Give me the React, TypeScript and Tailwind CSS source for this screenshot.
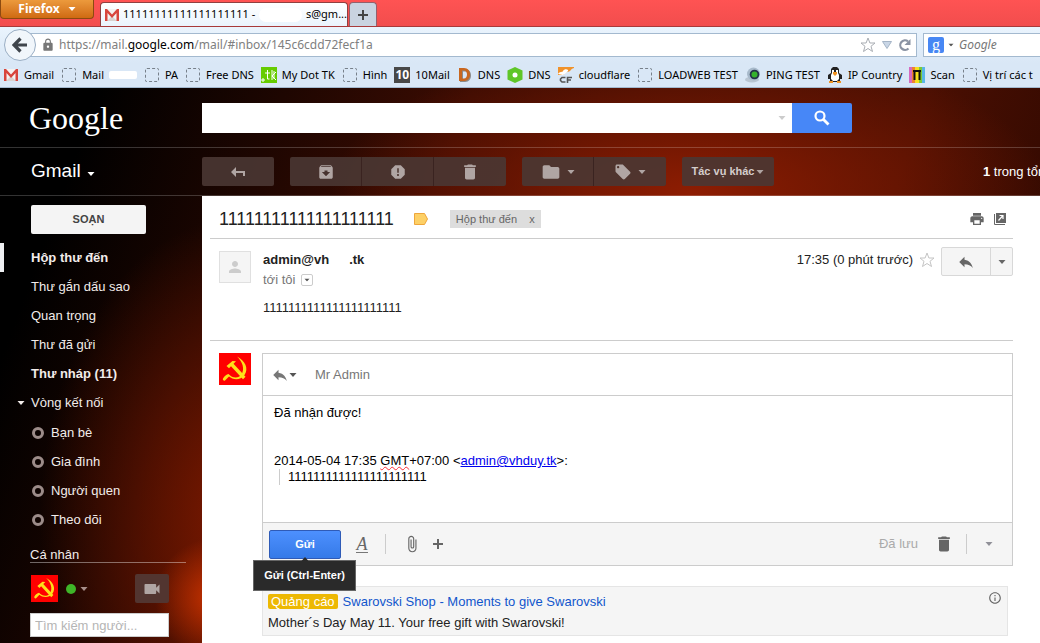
// src/App.tsx
import React from "react";
import {
  MdArchive,
  MdAttachFile,
  MdDelete,
  MdFolder,
  MdInfoOutline,
  MdLocalOffer,
  MdLock,
  MdPerson,
  MdPrint,
  MdReply,
  MdReport,
  MdVideocam,
} from "react-icons/md";

const Caret: React.FC<{ className?: string }> = ({ className = "" }) => (
  <svg
    viewBox="0 0 8 4"
    className={`h-1 w-2 shrink-0 ${className}`}
    fill="currentColor"
    aria-hidden="true"
  >
    <path d="M.5 0h7L4 4z" />
  </svg>
);

const GmailIcon: React.FC = () => (
  <svg viewBox="0 0 16 16" className="h-4 w-4 shrink-0" aria-hidden="true">
    <path d="M1 2h14v12H1z" fill="#f4f1f0" />
    <path d="M3 14l5-5 5 5z" fill="#d8d3d1" />
    <path d="M1 2h2l5 5.500L13 2h2v12h-2.500V6L8 11 3.500 6v8H1z" fill="#d8453c" />
  </svg>
);

const FlagIcon: React.FC<{ className: string }> = ({ className }) => (
  <svg viewBox="0 0 32 32" className={`shrink-0 ${className}`} aria-hidden="true">
    <path d="M0 0h32v32H0z" fill="#f00" />
    <path
      d="M18 3.500c8 4 12 12 7.500 18.500-4 5.500-11.500 5-15.500 1.500l-4 4c-1 .8-2.800-.8-2-2 1.500-2.500 3.500-4 5.500-4.500 4 4.500 10 4.800 13 .5 3.500-5.500 1-13-4.500-18z"
      fill="#fde01a"
    />
    <path d="M7.500 13l6-5 3.500.3-2.500 2.500 12 13-2.500 2.500-12-13-2 2z" fill="#fde01a" />
  </svg>
);

const BlankIcon: React.FC = () => (
  <span className="mx-px h-3.5 w-3.5 shrink-0 rounded-[2px] border border-dashed border-[#77808a]" />
);

const TkIcon: React.FC = () => (
  <svg viewBox="0 0 16 16" className="h-4 w-4 shrink-0" aria-hidden="true">
    <path d="M0 0h16v16H0z" fill="#6c0" />
    <path
      d="M1 12h2v2H1zM4 6h5M6.500 3v9h2M11 3v10M15 5l-4 4 4 4M13 4v8"
      fill="none"
      stroke="#fff"
      strokeWidth="1"
    />
  </svg>
);

const TenIcon: React.FC = () => (
  <span className="flex h-4 w-4 shrink-0 items-center justify-center bg-[#484848] text-xs font-bold text-white">
    10
  </span>
);

const DIcon: React.FC = () => (
  <svg viewBox="0 0 16 16" className="h-4 w-4 shrink-0" aria-hidden="true">
    <path
      d="M3 2h5c8 0 8 13 0 13H3zM6 4.500v8h2c4 0 4-8 0-8z"
      fill="#8b8b8b"
      fillRule="evenodd"
    />
    <path
      d="M2 1h5c8 0 8 13 0 13H2zM5 3.500v8h2c4 0 4-8 0-8z"
      fill="#c9671f"
      fillRule="evenodd"
    />
  </svg>
);

const HexIcon: React.FC = () => (
  <svg viewBox="0 0 16 16" className="h-4 w-4 shrink-0" aria-hidden="true">
    <path d="M8 0l7.500 3.500v9L8 16 .5 12.500v-9z" fill="#5fc628" />
    <circle cx="8" cy="8" r="2.500" fill="#fff" />
  </svg>
);

const CloudIcon: React.FC = () => (
  <svg viewBox="0 0 16 16" className="h-4 w-4 shrink-0" aria-hidden="true">
    <path d="M0 0h16v1c-4 1-3 4-7 4-2 0-2 3-5 3H0z" fill="#f0922b" />
    <path d="M0 7c2-3 4-1 5-3s4-2 5-1-3 4-5 5z" fill="#fff" />
    <path
      d="M7.500 10.500H4L2.500 12v1.500L4 15h3.500M9.500 16v-5.500H14M9.500 13H13"
      fill="none"
      stroke="#555"
      strokeWidth="1.600"
    />
  </svg>
);

const PingIcon: React.FC = () => (
  <svg viewBox="0 0 16 16" className="h-4 w-4 shrink-0" aria-hidden="true">
    <ellipse cx="7" cy="12.500" rx="7" ry="3" fill="#b9c6d3" />
    <circle cx="8.500" cy="7" r="6.500" fill="#a8bacb" />
    <circle cx="9.500" cy="7.500" r="4.800" fill="#25344a" />
    <circle cx="9.500" cy="7.500" r="3" fill="#35b32c" />
  </svg>
);

const PenguinIcon: React.FC = () => (
  <svg viewBox="0 0 16 16" className="h-4 w-4 shrink-0" aria-hidden="true">
    <path d="M4 2l2-2h4l2 2v4l3 2v4h-2v3H3v-3H1V8l3-2z" fill="#222" />
    <path d="M5 3h2v2h2V3h2v3l1 2v4l-2 2H6l-2-2V8l1-2z" fill="#fff" />
    <path d="M7 2h2v3H7z" fill="#222" />
    <path d="M6 5h4v2L8 9 6 7zM2 14h4v2H2zM10 14h4v2h-4z" fill="#f29422" />
  </svg>
);

const ScanIcon: React.FC = () => (
  <svg viewBox="0 0 16 16" className="h-4 w-4 shrink-0" aria-hidden="true">
    <path d="M0 0h3v16H0z" fill="#d56ac0" />
    <path d="M3 0h3v16H3z" fill="#ee8131" />
    <path d="M6 0h4v16H6z" fill="#f5e01d" />
    <path d="M10 0h3v16h-3z" fill="#7ccb35" />
    <path d="M13 0h3v16h-3z" fill="#59b6e6" />
    <path d="M4 4h8M5.500 4v9M10.500 4v9" stroke="#111" strokeWidth="2" />
  </svg>
);

const BackIcon: React.FC = () => (
  <svg viewBox="0 0 16 16" className="h-4 w-4" aria-hidden="true">
    <path
      d="M15 8H3M8.500 1.500L2 8l6.500 6.500"
      fill="none"
      stroke="currentColor"
      strokeWidth="3.200"
    />
  </svg>
);

const PlusIcon: React.FC = () => (
  <svg viewBox="0 0 10 10" className="h-2.5 w-2.5" aria-hidden="true">
    <path d="M0 5h10M5 0v10" stroke="currentColor" strokeWidth="2" />
  </svg>
);

const SearchIcon: React.FC = () => (
  <svg viewBox="0 0 16 16" className="h-4 w-4" aria-hidden="true">
    <circle cx="6" cy="6" r="4.500" fill="none" stroke="currentColor" strokeWidth="2.200" />
    <path d="M9.500 9.500l5 5" stroke="currentColor" strokeWidth="2.800" />
  </svg>
);

const ReloadIcon: React.FC = () => (
  <svg viewBox="0 0 14 14" className="h-3.5 w-3.5 text-[#8a93a3]" aria-hidden="true">
    <path
      d="M10.500 10.500A4.800 4.800 0 1110 3.300"
      fill="none"
      stroke="currentColor"
      strokeWidth="2.200"
    />
    <path d="M12.500 1v6H6.500z" fill="currentColor" />
  </svg>
);

const ReplyArrow: React.FC = () => (
  <svg viewBox="0 0 14 10" className="h-2.5 w-3.5" fill="currentColor" aria-hidden="true">
    <path d="M5 0v4h9v5h-2V6H5v4L0 5z" />
  </svg>
);

const StarIcon: React.FC<{ className: string }> = ({ className }) => (
  <svg viewBox="0 0 16 16" className={`h-4 w-4 shrink-0 ${className}`} aria-hidden="true">
    <path
      d="M8 1l1.900 5H15l-4 3.300 1.500 5.200L8 11.500l-4.500 3L5 9.300 1 6h5.100z"
      fill="#fff"
      stroke="currentColor"
    />
  </svg>
);

const PopOutIcon: React.FC = () => (
  <svg viewBox="0 0 12 12" className="h-3 w-3" aria-hidden="true">
    <path d="M2 0h10v10H2z" fill="#666" />
    <path d="M.5 1v10.500H11" fill="none" stroke="#666" />
    <path d="M4.500 7.500l4.500-5M5.500 2.500H9V6" fill="none" stroke="#fff" strokeWidth="1.200" />
  </svg>
);

const bookmarks = [
  { label: "Gmail", icon: <GmailIcon /> },
  { label: "Mail", icon: <BlankIcon />, masked: true },
  { label: "PA", icon: <BlankIcon /> },
  { label: "Free DNS", icon: <BlankIcon /> },
  { label: "My Dot TK", icon: <TkIcon /> },
  { label: "Hình", icon: <BlankIcon /> },
  { label: "10Mail", icon: <TenIcon /> },
  { label: "DNS", icon: <DIcon /> },
  { label: "DNS", icon: <HexIcon /> },
  { label: "cloudflare", icon: <CloudIcon /> },
  { label: "LOADWEB TEST", icon: <BlankIcon /> },
  { label: "PING TEST", icon: <PingIcon /> },
  { label: "IP Country", icon: <PenguinIcon /> },
  { label: "Scan", icon: <ScanIcon /> },
  { label: "Vị trí các t", icon: <BlankIcon /> },
];

const folders = [
  { label: "Hộp thư đến", bold: true, active: true },
  { label: "Thư gắn dấu sao" },
  { label: "Quan trọng" },
  { label: "Thư đã gửi" },
  { label: "Thư nháp (11)", bold: true },
];

const circles = ["Bạn bè", "Gia đình", "Người quen", "Theo dõi"];

const BrowserChrome: React.FC = () => (
  <div className="shrink-0 bg-[#d9e7f6] font-['Segoe_UI','Noto_Sans',sans-serif] text-[11px] whitespace-nowrap text-black">
    <div className="flex h-[27px] items-end border-b border-[#a83a3a] bg-linear-to-b from-[#ff5353] to-[#f24d4d]">
      <button className="flex h-[19px] w-[94px] items-center justify-center gap-2 self-start rounded-b border border-t-0 border-[#8c4a10] bg-linear-to-b from-[#ec9a3c] to-[#cf6a10] text-xs font-bold text-white">
        Firefox
        <Caret />
      </button>
      <div className="ml-1.5 flex h-6 w-[248px] items-center overflow-hidden rounded-t border border-b-0 border-[#8f4040] bg-linear-to-b from-white to-[#eaf4fd] pl-[3px]">
        <GmailIcon />
        <span className="ml-[3px]">11111111111111111111 -</span>
        <span className="mx-1 h-3.5 w-11 shrink rounded-full bg-white" />
        <span>s@gm...</span>
      </div>
      <button
        aria-label="New tab"
        className="ml-px flex h-6 w-7 items-center justify-center rounded-t border border-b-0 border-[#93606b] bg-[#c9d3e0] text-[#444]"
      >
        <PlusIcon />
      </button>
    </div>
    <div className="flex h-9 items-center bg-linear-to-b from-[#eaf4fd] to-[#d9e7f6] pl-1">
      <button
        aria-label="Back"
        className="z-10 flex h-8 w-8 shrink-0 items-center justify-center rounded-full border border-[#9aaec4] bg-[#f1f6fb] text-[#3f454c]"
      >
        <BackIcon />
      </button>
      <div className="-ml-2 flex h-6 flex-1 items-center border border-[#a3b9cf] bg-white pr-1 pl-3">
        <MdLock className="h-3.5 w-3.5 text-[#777]" />
        <span className="ml-1 flex-1 text-xs text-[#808080]">
          https://mail.<span className="text-black">google.com</span>
          /mail/#inbox/145c6cdd72fecf1a
        </span>
        <StarIcon className="text-[#a9adb3]" />
        <svg viewBox="0 0 10 8" className="mx-1.5 h-2 w-2.5" aria-hidden="true">
          <path d="M.5.5h9L5 7.500z" fill="#c9d6e6" stroke="#a5b4c6" />
        </svg>
        <ReloadIcon />
      </div>
      <div className="ml-1.5 flex h-6 w-[117px] items-center border border-r-0 border-[#a3b9cf] bg-white pl-1">
        <span className="flex h-4 w-4 items-center justify-center rounded-xs bg-[#4787f4] font-['Liberation_Serif',serif] text-base leading-none text-white">
          g
        </span>
        <Caret className="ml-[3px] scale-75 text-[#555]" />
        <input
          aria-label="Search"
          placeholder="Google"
          className="w-16 pl-1 text-xs italic outline-none placeholder:text-[#777]"
        />
      </div>
    </div>
    <div className="flex h-[25px] items-center gap-[7px] overflow-hidden border-b border-[#a3b9cf] pl-[3px]">
      {bookmarks.map((item, index) => (
        <a key={index} href="#" className="flex shrink-0 items-center gap-[5px]">
          {item.icon}
          {item.label}
          {item.masked && <span className="h-2 w-7 rounded-xs bg-white" />}
        </a>
      ))}
    </div>
  </div>
);

const toolButton =
  "flex h-[29px] w-[72px] items-center justify-center gap-1.5 bg-[#4a3733]/90 text-[#b0a5a3]";

const Toolbar: React.FC = () => (
  <div className="flex h-12 shrink-0 items-center border-b border-white/20">
    <button className="flex w-[202px] shrink-0 items-center gap-1.5 pl-[31px] text-[19px] text-white">
      Gmail
      <Caret className="mt-1" />
    </button>
    <div className="flex flex-1 items-center gap-4">
      <button aria-label="Back" className={`${toolButton} rounded-xs`}>
        <ReplyArrow />
      </button>
      <div className="flex divide-x divide-[#3a2320] overflow-hidden rounded-xs">
        <button aria-label="Archive" className={toolButton}>
          <MdArchive className="h-[18px] w-[18px]" />
        </button>
        <button aria-label="Report spam" className={toolButton}>
          <MdReport className="h-[18px] w-[18px]" />
        </button>
        <button aria-label="Delete" className={toolButton}>
          <MdDelete className="h-5 w-5" />
        </button>
      </div>
      <div className="flex divide-x divide-[#3a2320] overflow-hidden rounded-xs">
        <button aria-label="Move to" className={toolButton}>
          <MdFolder className="h-5 w-5" />
          <Caret />
        </button>
        <button aria-label="Labels" className={toolButton}>
          <MdLocalOffer className="h-[18px] w-[18px]" />
          <Caret />
        </button>
      </div>
      <button className="flex h-[29px] w-[92px] items-center justify-center gap-0.5 rounded-xs bg-[#4a3733]/90 text-[11px] font-bold whitespace-nowrap text-[#d4cdcb]">
        Tác vụ khác
        <Caret className="text-[#b0a5a3]" />
      </button>
    </div>
    <p className="w-[57px] shrink-0 whitespace-nowrap text-white">
      <b>1</b> trong tổn
    </p>
  </div>
);

const Sidebar: React.FC = () => (
  <aside className="w-[202px] shrink-0 pt-[9px] text-[#f2ecea]">
    <button className="ml-[31px] h-[29px] w-[115px] rounded-xs bg-[#f4f4f4] text-[11px] font-bold text-[#444]">
      SOẠN
    </button>
    <ul className="mt-[9px]">
      {folders.map((item) => (
        <li key={item.label}>
          <a
            href="#"
            className={`flex h-[29px] items-center border-l-4 pl-[27px] ${item.active ? "border-[#eef0f2]" : "border-transparent"} ${item.bold ? "font-bold" : ""}`}
          >
            {item.label}
          </a>
        </li>
      ))}
      <li>
        <button className="flex h-[30px] items-center gap-1.5 pl-[17px]">
          <Caret />
          Vòng kết nối
        </button>
      </li>
      {circles.map((label) => (
        <li key={label}>
          <a href="#" className="flex h-[29px] items-center gap-[7px] pl-8">
            <span className="h-3 w-3 rounded-full border-[3px] border-[#9c8c89]" />
            {label}
          </a>
        </li>
      ))}
    </ul>
    <h2 className="mr-4 ml-[30px] mt-[13px] border-b border-white/40">
      <span className="block h-[15px] leading-[15px]">Cá nhân</span>
    </h2>
    <div className="mt-[11px] flex items-center pl-[31px]">
      <FlagIcon className="h-[27px] w-[27px]" />
      <span className="ml-2 h-2.5 w-2.5 rounded-full bg-[#3fb528]" />
      <Caret className="ml-1 text-[#a88f8a]" />
      <button
        aria-label="Video call"
        className="ml-[47px] flex h-[29px] w-[34px] items-center justify-center rounded-xs bg-[#523530] text-[#b0a5a3]"
      >
        <MdVideocam className="h-5 w-5" />
      </button>
    </div>
    <input
      aria-label="Tìm kiếm người"
      placeholder="Tìm kiếm người..."
      className="mt-2.5 ml-[30px] h-6 w-[139px] border border-[#ccc] bg-white px-1 outline-none placeholder:text-[#b5b5b5]"
    />
  </aside>
);

const Message: React.FC = () => (
  <article className="flex h-[102px] border-b border-[#ccc] pt-3 pl-[9px]">
    <span className="flex h-8 w-8 shrink-0 items-center justify-center border border-[#e0e0e0] bg-[#f5f5f5]">
      <MdPerson className="h-[18px] w-[18px] text-[#ccc]" />
    </span>
    <div className="ml-3 flex-1">
      <p className="flex h-[18px] items-center font-bold">
        admin@vh
        <span className="w-5" />
        .tk
      </p>
      <p className="mt-0.5 flex h-[18px] items-center gap-1.5 text-[#777]">
        tới tôi
        <button
          aria-label="Details"
          className="flex h-3 w-3 items-center justify-center rounded-xs border border-[#ccc] text-[#555]"
        >
          <Caret className="scale-75" />
        </button>
      </p>
      <p className="mt-[9px]">1111111111111111111111</p>
    </div>
    <div className="flex h-[18px] items-center gap-1.5">
      17:35 (0 phút trước)
      <StarIcon className="text-[#c4c4c4]" />
    </div>
    <div className="-mt-1 ml-1.5 flex h-[29px] divide-x divide-[#d8d8d8] rounded-xs border border-[#d8d8d8] bg-[#f5f5f5] text-[#666]">
      <button aria-label="Reply" className="flex w-[49px] items-center justify-center">
        <MdReply className="h-[18px] w-[18px]" />
      </button>
      <button aria-label="More" className="flex w-[21px] items-center justify-center">
        <Caret />
      </button>
    </div>
  </article>
);

const ReplyBox: React.FC = () => (
  <section className="mt-3 flex pl-[9px]">
    <FlagIcon className="h-8 w-8" />
    <div className="ml-[11px] flex-1 border border-[#ccc]">
      <div className="flex h-[42px] items-center border-b border-[#ccc] pl-2 text-[#777]">
        <button aria-label="Reply type" className="flex items-center">
          <MdReply className="h-[18px] w-[18px]" />
          <Caret className="text-[#555]" />
        </button>
        <span className="ml-[18px]">Mr Admin</span>
      </div>
      <div
        role="textbox"
        aria-label="Reply"
        className="h-[126px] pt-[9px] pl-[11px] leading-4 text-black"
      >
        <p>Đã nhận được!</p>
        <p className="mt-8">
          2014-05-04 17:35{" "}
          <span className="underline decoration-red-500 decoration-wavy decoration-1 underline-offset-1">
            GMT
          </span>
          +07:00 &lt;
          <a href="#" className="text-[#00e] underline">
            admin@vhduy.tk
          </a>
          &gt;:
        </p>
        <blockquote className="ml-[5px] border-l border-[#ccc] pl-2">
          1111111111111111111111
        </blockquote>
      </div>
      <div className="flex h-[43px] items-center border-t border-[#ccc] bg-[#f5f5f5] pr-[19px] pl-1.5 text-[#666]">
        <div className="relative">
          <button className="h-[29px] w-[72px] rounded-xs border border-[#2f5bb7] bg-linear-to-b from-[#4d90fe] to-[#357ae8] text-[11px] font-bold text-white">
            Gửi
          </button>
          <div
            role="tooltip"
            className="absolute top-[30px] -left-4 flex h-[31px] w-[103px] items-center justify-center border border-[#666] bg-[#2a2a2a] text-[11px] font-bold whitespace-nowrap text-white"
          >
            <Caret className="absolute -top-1 rotate-180 text-[#2a2a2a]" />
            Gửi (Ctrl-Enter)
          </div>
        </div>
        <button
          aria-label="Formatting"
          className="ml-[15px] h-[18px] w-3 border-b border-[#777] font-['Liberation_Serif',serif] text-lg leading-4 italic"
        >
          A
        </button>
        <span className="mx-[17px] h-5 w-px bg-[#ccc]" />
        <button aria-label="Attach">
          <MdAttachFile className="h-[18px] w-[18px]" />
        </button>
        <button aria-label="Insert" className="ml-3">
          <PlusIcon />
        </button>
        <span className="ml-auto text-[#aaa]">Đã lưu</span>
        <button aria-label="Discard" className="ml-4">
          <MdDelete className="h-5 w-5" />
        </button>
        <span className="mr-[18px] ml-3 h-5 w-px bg-[#ccc]" />
        <button aria-label="More options">
          <Caret className="text-[#909098]" />
        </button>
      </div>
    </div>
  </section>
);

const App: React.FC = () => (
  <div className="flex h-screen flex-col overflow-hidden">
    <BrowserChrome />
    <div className="flex min-h-0 flex-1 flex-col bg-[radial-gradient(circle_60px_at_215px_510px,#c83200,transparent),radial-gradient(ellipse_200px_300px_at_240px_430px,#7d1900,transparent),radial-gradient(ellipse_360px_150px_at_690px_105px,#8e1d02,transparent),linear-gradient(110deg,#000_8%,#3c0c02_38%,#4a0f02_75%,#200500)] font-['Liberation_Sans',Arial,sans-serif] text-[13px] text-[#222]">
      <header className="flex h-[60px] shrink-0 items-center border-b border-white/20">
        <a
          href="#"
          className="w-[202px] shrink-0 pl-[29px] font-['Liberation_Serif',serif] text-[32px] text-white"
        >
          Google
        </a>
        <form className="flex h-[30px] flex-1">
          <div className="flex max-w-[590px] flex-1 items-center bg-white pr-1.5">
            <input aria-label="Search mail" className="flex-1 px-2 outline-none" />
            <Caret className="text-[#ccc]" />
          </div>
          <button
            type="button"
            aria-label="Search"
            className="flex w-[60px] items-center justify-center rounded-r-xs bg-[#4787f7] text-white"
          >
            <SearchIcon />
          </button>
        </form>
      </header>
      <Toolbar />
      <div className="flex min-h-0 flex-1">
        <Sidebar />
        <main className="flex-1 bg-white pr-[27px] pl-2">
          <div className="flex h-[43px] items-center border-b border-[#ccc] pt-1 pl-[9px]">
            <h1 className="text-lg">11111111111111111111</h1>
            <svg viewBox="0 0 14 12" className="ml-5 h-3 w-3.5" aria-hidden="true">
              <path d="M.5.5h10l3 5.500-3 5.500H.500z" fill="#fdd066" stroke="#eea63c" />
            </svg>
            <span className="ml-[22px] flex h-[18px] w-[91px] items-center justify-between bg-[#ddd] px-1.5 text-[11px] text-[#666]">
              Hộp thư đến
              <button aria-label="Remove label">x</button>
            </span>
            <button aria-label="Print" className="ml-auto">
              <MdPrint className="h-4 w-4 text-[#666]" />
            </button>
            <button aria-label="Open in new window" className="mr-[7px] ml-[9px]">
              <PopOutIcon />
            </button>
          </div>
          <Message />
          <ReplyBox />
          <section className="mt-5 mr-[5px] ml-[52px] flex h-[50px] justify-between border border-[#e5e5e5] bg-[#f5f5f5] px-[5px] pt-1 leading-[21px]">
            <div>
              <p className="flex h-[21px] items-center">
                <span className="rounded-xs bg-[#edb802] px-[3px] leading-[15px] text-white">
                  Quảng cáo
                </span>
                <a href="#" className="ml-[5px] text-[#1155cc]">
                  Swarovski Shop - Moments to give Swarovski
                </a>
              </p>
              <p>Mother´s Day May 11. Your free gift with Swarovski!</p>
            </div>
            <MdInfoOutline className="h-3.5 w-3.5 text-[#666]" />
          </section>
        </main>
      </div>
    </div>
  </div>
);

export default App;
